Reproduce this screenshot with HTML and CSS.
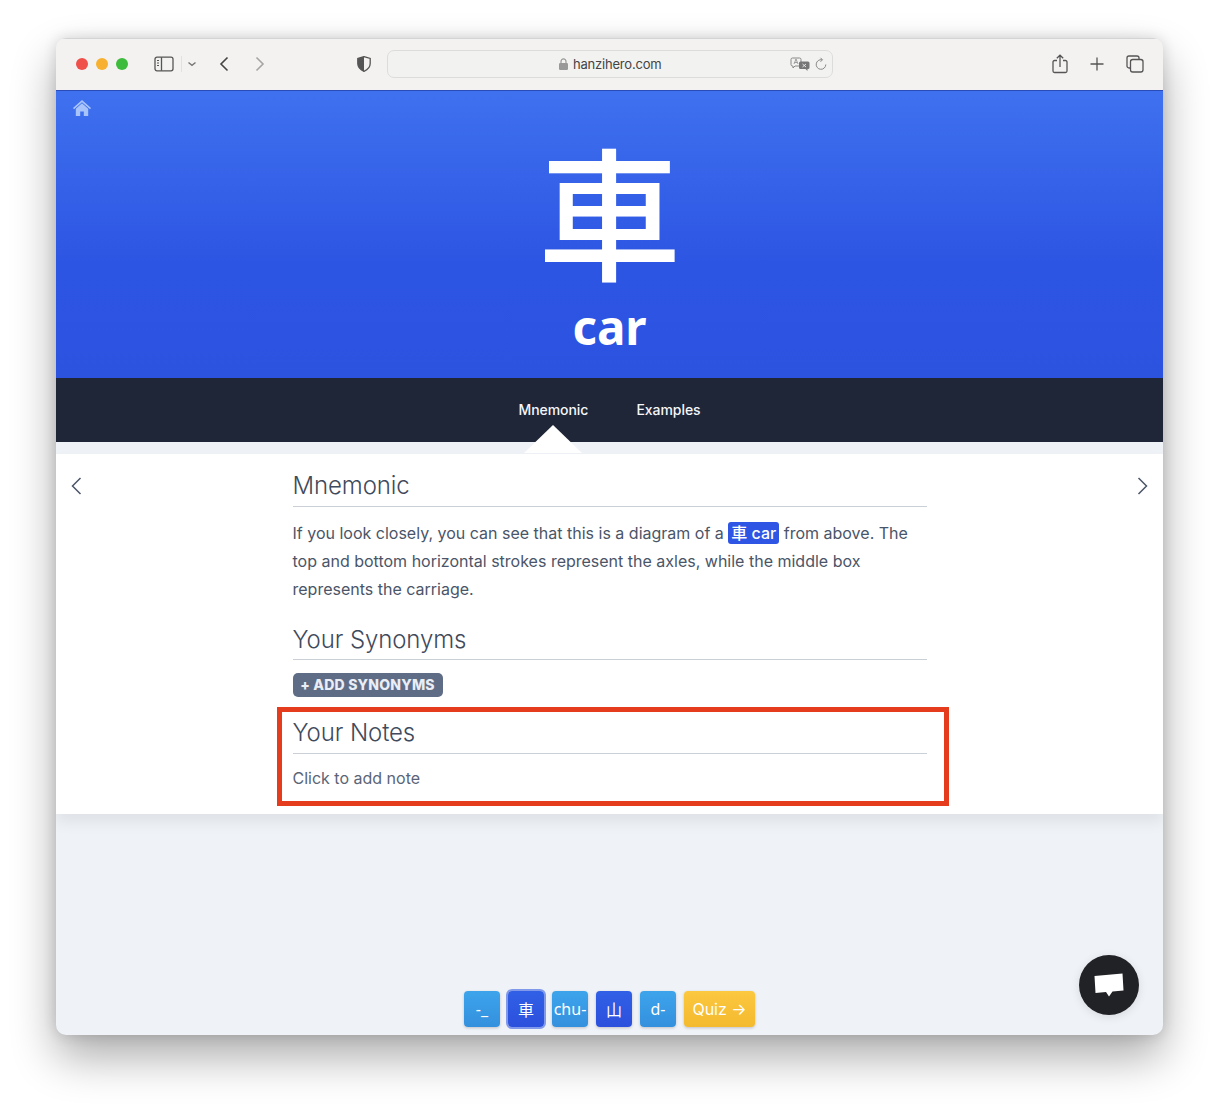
FILE: index.html
```html
<!DOCTYPE html>
<html lang="en">
<head>
<meta charset="utf-8">
<title>car - hanzihero.com</title>
<link rel="stylesheet" href="styles.css">
</head>
<body>
<div class="window">
  <header class="toolbar">
    <div class="lights"><span class="light red"></span><span class="light yellow"></span><span class="light green"></span></div>
    <svg class="ti sidebar" width="20" height="16" viewBox="0 0 20 16" fill="none" stroke="#555" stroke-width="1.3"><rect x="1" y="1.2" width="18" height="13.6" rx="2"/><path d="M7.5 1.2v13.6"/><path d="M3 4.5h2M3 7h2M3 9.5h2" stroke-width="1.1"/></svg>
    <span class="sep"></span>
    <svg class="ti chev" width="10" height="6" viewBox="0 0 10 6" fill="none" stroke="#777" stroke-width="1.4"><path d="M1.5 1.5 5 4.3l3.5-2.8"/></svg>
    <svg class="ti back" width="10" height="16" viewBox="0 0 10 16" fill="none" stroke="#444" stroke-width="1.6"><path d="M8.5 1.5 2 8l6.5 6.5"/></svg>
    <svg class="ti fwd" width="10" height="16" viewBox="0 0 10 16" fill="none" stroke="#a5a5a5" stroke-width="1.6"><path d="M1.5 1.5 8 8l-6.5 6.5"/></svg>
    <svg class="ti shield" width="14" height="16" viewBox="0 0 14 16"><path d="M7 .6 13.2 2.4v5.2c0 3.6-2.6 6.2-6.2 7.8C3.400 13.800.8 11.200.8 7.600V2.400Z" fill="none" stroke="#555" stroke-width="1.3"/><path d="M7 .6v14.800C3.400 13.800.8 11.200.8 7.600V2.400Z" fill="#555"/></svg>
    <div class="address">
      <svg class="lock" width="9" height="12" viewBox="0 0 9 12"><path d="M2 5.500V3.400a2.500 2.500 0 0 1 5 0v2.100" fill="none" stroke="#999" stroke-width="1.2"/><rect y="5" width="9" height="7" rx="1.300" fill="#999"/></svg>
      <span class="host">hanzihero.com</span>
      <svg class="translate" width="20" height="14" viewBox="0 0 20 14"><path d="M2.500 1h7A1.500 1.500 0 0 1 11 2.500v5A1.500 1.500 0 0 1 9.500 9H5l-2 2V9h-.500A1.500 1.500 0 0 1 1 7.500v-5A1.500 1.500 0 0 1 2.500 1Z" fill="none" stroke="#888" stroke-width="1"/><path d="M4 7l2-5 2 5M4.800 5.500h2.400" fill="none" stroke="#888" stroke-width=".8"/><path d="M10.500 4.500h7.500a1.500 1.500 0 0 1 1.500 1.500v4.500a1.500 1.500 0 0 1-1.500 1.500h-.500v2l-2-2h-5.500A1.500 1.500 0 0 1 9 10.500V6a1.500 1.500 0 0 1 1.500-1.500Z" fill="#777"/><path d="M12.500 7l3.500 3M16 7l-3.500 3" stroke="#eee" stroke-width=".9"/></svg>
      <svg class="reload" width="12" height="14" viewBox="0 0 12 14" fill="none" stroke="#888" stroke-width="1"><path d="M7 2.800A4.800 4.800 0 1 0 10.800 7.500"/><path d="M5.500 .8 7.500 2.800 5.500 4.800"/></svg>
    </div>
    <svg class="ti share" width="16" height="20" viewBox="0 0 16 20" fill="none" stroke="#555" stroke-width="1.300"><path d="M5 6.500H2.500a1.500 1.500 0 0 0-1.500 1.500v9a1.500 1.500 0 0 0 1.500 1.500h11a1.500 1.500 0 0 0 1.500-1.500V8a1.500 1.500 0 0 0-1.500-1.500H11"/><path d="M8 13V1.200M4.800 4.200 8 1.200l3.200 3"/></svg>
    <svg class="ti plus" width="14" height="14" viewBox="0 0 14 14" fill="none" stroke="#555" stroke-width="1.300"><path d="M7 .5v13M.5 7h13"/></svg>
    <svg class="ti tabs" width="18" height="18" viewBox="0 0 18 18" fill="none" stroke="#555" stroke-width="1.300"><rect x="4.500" y="4.500" width="12.500" height="12.500" rx="2.200"/><path d="M4.500 13H3a2 2 0 0 1-2-2V3a2 2 0 0 1 2-2h8a2 2 0 0 1 2 2v1.500"/></svg>
  </header>

  <section class="hero">
    <a class="home" href="#" aria-label="Home">
      <svg width="18" height="16" viewBox="0 0 18 16"><path d="M9 0 0 8l1 1.200L9 2.200l8 7L18 8Z" fill="#a9c4fb"/><path d="M9 3.200 2.800 8.700V16h4.400v-4.500h3.600V16h4.400V8.700Z" fill="#a9c4fb"/></svg>
    </a>
    <div class="glyph">車</div>
    <h1 class="meaning">car</h1>
  </section>

  <nav class="tabs-bar">
    <a class="tab active" href="#">Mnemonic</a>
    <a class="tab" href="#">Examples</a>
  </nav>

  <main class="card">
    <span class="pager prev"><svg width="11" height="18" viewBox="0 0 11 18" fill="none" stroke="#4a5568" stroke-width="1.500"><path d="M9.500 1 1.500 9l8 8"/></svg></span>
    <span class="pager next"><svg width="11" height="18" viewBox="0 0 11 18" fill="none" stroke="#4a5568" stroke-width="1.500"><path d="M1.500 1l8 8-8 8"/></svg></span>
    <div class="column">
      <h2 class="heading">Mnemonic</h2>
      <p class="body-text">If you look closely, you can see that this is a diagram of a <span class="tag">車 car</span> from above. The top and bottom horizontal strokes represent the axles, while the middle box represents the carriage.</p>
      <h2 class="heading second">Your Synonyms</h2>
      <button class="add-btn">+ ADD SYNONYMS</button>
      <section class="notes">
        <h2 class="heading">Your Notes</h2>
        <p class="note-text">Click to add note</p>
        <div class="highlight"></div>
      </section>
    </div>
  </main>

  <div class="dock">
    <span class="key sky">-_</span>
    <span class="key royal current">車</span>
    <span class="key sky">chu-</span>
    <span class="key royal">山</span>
    <span class="key sky">d-</span>
    <span class="key quiz">Quiz →</span>
  </div>

  <button class="chat" aria-label="Chat">
    <svg width="32" height="26" viewBox="0 0 32 26"><path d="M1.500 4 29.500 1.500 30.500 18.500 19.500 19.500 16 24.500 13 20 2.500 21Z" fill="#fff"/></svg>
  </button>
</div>
</body>
</html>
```
FILE: styles.css
```css
* { box-sizing: border-box; }
html, body { margin: 0; height: 100%; }
body {
  background: #fff;
  padding: 38px 56px 74px;
  font-family: Inter, "Noto Sans CJK JP", sans-serif;
  overflow: hidden;
}
.window {
  position: relative;
  width: 1107px;
  height: 997px;
  border-radius: 10px;
  background: #eff2f7;
  overflow: hidden;
  box-shadow: 0 22px 45px rgba(0,0,0,.33), 0 0 14px rgba(0,0,0,.14);
}
.toolbar {
  height: 53px;
  background: #f3f2f0;
  border-top: 1px solid #d4d4d4;
  border-bottom: 1px solid #2a4cb8;
  position: relative;
  display: flex;
  align-items: center;
  padding: 0 0 1px 20px;
}
.lights { display: flex; gap: 8px; }
.light { width: 12px; height: 12px; border-radius: 50%; }
.red { background: #f0504a; }
.yellow { background: #f7b02f; }
.green { background: #3dbb3c; }
.ti { flex: none; }
.sidebar { margin-left: 26px; }
.sep { width: 1px; height: 16px; margin-left: 7px; background: #e2e1df; }
.chev { margin-left: 5px; }
.back { margin-left: 22px; }
.fwd { margin-left: 26px; }
.shield { margin-left: 92px; }
.address {
  margin-left: 16px;
  width: 446px;
  height: 28px;
  border: 1px solid #dcdcdb;
  border-radius: 7px;
  background: #f2f2f1;
  display: flex;
  align-items: center;
  padding-left: 171px;
  color: #444;
}
.lock { margin-right: 5px; }
.host { font-size: 13px; letter-spacing: -.2px; width: 91px; white-space: nowrap; }
.translate { margin-left: 126px; }
.reload { margin-left: 5px; }
.share { margin-left: 219px; }
.plus { margin-left: 22px; }
.tabs { margin-left: 22px; }

.hero {
  position: relative;
  height: 287px;
  background: linear-gradient(180deg, #3f71ef 0%, #2d55e3 60%, #2c52e0 100%);
  color: #fff;
  text-align: center;
  padding-top: 36px;
}
.home { position: absolute; left: 17px; top: 9px; line-height: 0; }
.glyph {
  font-family: "Noto Sans CJK JP", sans-serif;
  font-size: 143px;
  font-weight: 500;
  line-height: 162px;
  height: 170px;
}
.meaning {
  margin: 0;
  font-family: "Noto Sans", sans-serif;
  font-weight: 700;
  font-size: 47.5px;
  line-height: 60px;
}
.tabs-bar {
  height: 64px;
  background: #1f2637;
  display: flex;
  justify-content: center;
  align-items: center;
  gap: 48px;
  padding-bottom: 2px;
}
.tab {
  position: relative;
  color: #f4f6fb;
  font-size: 14px;
  font-weight: 500;
  letter-spacing: -.05px;
  text-decoration: none;
}
.tab.active::after {
  content: "";
  position: absolute;
  left: 50%;
  top: 24px;
  margin-left: -29px;
  border-left: 29px solid transparent;
  border-right: 29px solid transparent;
  border-bottom: 28px solid #fff;
}
.card {
  position: relative;
  margin-top: 12px;
  height: 360px;
  background: #fff;
  box-shadow: 0 8px 14px rgba(0,0,0,.07);
}
.pager { position: absolute; top: 23px; line-height: 0; }
.prev { left: 15px; }
.next { right: 15px; }
.column { width: 634px; margin: 0 auto; }
.heading {
  margin: 0;
  padding-top: 16px;
  height: 53px;
  font-size: 24px;
  font-weight: 300;
  line-height: 32px;
  letter-spacing: -.1px;
  color: #3f4a5c;
  border-bottom: 1px solid #cbd0d6;
}
.second { margin-top: 5px; height: 52px; }
.body-text {
  margin: 12px 0 0;
  font-size: 16px;
  line-height: 28px;
  color: #4a5568;
}
.tag {
  display: inline-block;
  line-height: 22px;
  padding: 0 3px;
  background: #2e55e3;
  color: #fff;
  font-weight: 500;
  border-radius: 3px;
}
.add-btn {
  display: block;
  margin-top: 13px;
  height: 24px;
  width: 150px;
  padding: 0 0 2px;
  border: 0;
  border-radius: 5px;
  background: #5f6c85;
  color: #e9edf5;
  font-family: Inter, sans-serif;
  font-size: 14px;
  font-weight: 800;
  letter-spacing: .2px;
}
.notes { position: relative; }
.notes .heading { height: 57px; padding-top: 20px; }
.note-text { margin: 13px 0 0; font-size: 16px; line-height: 22px; color: #5a6577; }
.highlight {
  position: absolute;
  left: -16px;
  right: -22px;
  top: 10px;
  height: 99px;
  border: 5px solid #e63c1e;
  pointer-events: none;
}
.dock {
  position: absolute;
  left: 0;
  right: 0;
  bottom: 8px;
  display: flex;
  justify-content: center;
  gap: 8px;
}
.key {
  width: 36px;
  height: 36px;
  border-radius: 4px;
  color: #fff;
  font-family: "Noto Sans", "Noto Sans CJK JP", sans-serif;
  font-size: 16px;
  display: flex;
  align-items: center;
  justify-content: center;
  white-space: nowrap;
  box-shadow: 0 1px 3px rgba(0,0,0,.2);
}
.sky { background: linear-gradient(180deg, #3da4ec, #3490dd); }
.royal { background: linear-gradient(180deg, #3160e6, #2c50dd); }
.current { box-shadow: 0 0 0 2px #8099ea; }
.quiz { width: 71px; background: linear-gradient(180deg, #fbc83f, #f4b92f); font-family: Inter, sans-serif; font-weight: 400; }
.chat {
  position: absolute;
  right: 24px;
  bottom: 20px;
  width: 60px;
  height: 60px;
  padding: 0;
  border: 0;
  border-radius: 50%;
  background: #212226;
  display: flex;
  align-items: center;
  justify-content: center;
  box-shadow: 0 2px 10px rgba(0,0,0,.1);
}
```
